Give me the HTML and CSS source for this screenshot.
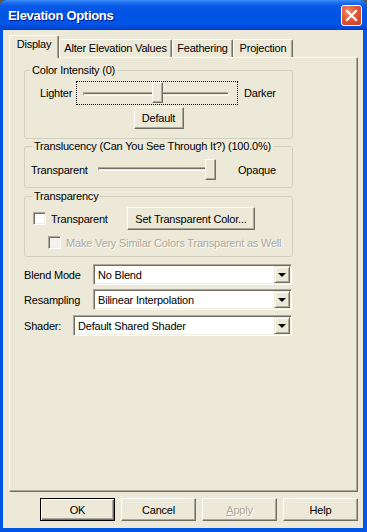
FILE: index.html
```html
<!DOCTYPE html>
<html>
<head>
<meta charset="utf-8">
<link rel="stylesheet" href="styles.css">
</head>
<body>
<div class="window">
  <div class="titlebar">
    <span class="title">Elevation Options</span>
    <span class="close">
      <svg width="21" height="21" viewBox="0 0 21 21">
        <path d="M6 6 L15 15 M15 6 L6 15" stroke="#fff" stroke-width="2.2" stroke-linecap="square"/>
      </svg>
    </span>
  </div>
  <div class="client">
    <div class="tabs">
      <div class="tab selected w-display">Display</div>
      <div class="tab w-alter">Alter Elevation Values</div>
      <div class="tab w-feather">Feathering</div>
      <div class="tab w-proj">Projection</div>
    </div>
    <div class="panel">
      <fieldset class="group g1">
        <legend>Color Intensity (0)</legend>
        <div class="row r1">
          <span class="lbl lbl-lighter">Lighter</span>
          <div class="slider s1">
            <div class="track"></div>
            <div class="thumb"></div>
          </div>
          <span class="lbl lbl-darker">Darker</span>
        </div>
        <div class="center">
          <button class="btn btn-default">Default</button>
        </div>
      </fieldset>

      <fieldset class="group g2">
        <legend>Translucency (Can You See Through It?) (100.0%)</legend>
        <div class="row r2">
          <span class="lbl lbl-transp">Transparent</span>
          <div class="slider s2">
            <div class="track"></div>
            <div class="thumb"></div>
          </div>
          <span class="lbl lbl-opaque">Opaque</span>
        </div>
      </fieldset>

      <fieldset class="group g3">
        <legend>Transparency</legend>
        <div class="row r3">
          <span class="check"></span>
          <span class="lbl lbl-chk">Transparent</span>
          <button class="btn btn-setcolor">Set Transparent Color...</button>
        </div>
        <div class="row r4">
          <span class="check disabled"></span>
          <span class="lbl disabled-text">Make Very Similar Colors Transparent as Well</span>
        </div>
      </fieldset>

      <div class="field f1">
        <span class="flabel fl-wide">Blend Mode</span>
        <div class="combo cw-199"><span class="ctext">No Blend</span><span class="dd"><span class="arrow"></span></span></div>
      </div>
      <div class="field f2">
        <span class="flabel fl-wide">Resampling</span>
        <div class="combo cw-199"><span class="ctext">Bilinear Interpolation</span><span class="dd"><span class="arrow"></span></span></div>
      </div>
      <div class="field f3">
        <span class="flabel fl-narrow">Shader:</span>
        <div class="combo cw-219"><span class="ctext">Default Shared Shader</span><span class="dd"><span class="arrow"></span></span></div>
      </div>
    </div>
    <div class="buttons">
      <button class="btn dlg default-btn">OK</button>
      <button class="btn dlg">Cancel</button>
      <button class="btn dlg disabled-btn"><u>A</u>pply</button>
      <button class="btn dlg">Help</button>
    </div>
  </div>
</div>
</body>
</html>
```

FILE: styles.css
```css
html, body {
  margin: 0;
  padding: 0;
  background: #5a5a4a;
}
body {
  width: 367px;
  height: 532px;
  overflow: hidden;
  font-family: "Liberation Sans", Arial, sans-serif;
  font-size: 11px;
  letter-spacing: -0.2px;
  color: #000;
}
.window {
  width: 367px;
  height: 532px;
  display: flex;
  flex-direction: column;
  border-radius: 7px 7px 0 0;
  overflow: hidden;
  background: #0055e5;
}
.titlebar {
  height: 30px;
  flex: none;
  display: flex;
  align-items: center;
  justify-content: space-between;
  padding: 0 5px 0 8px;
  background: linear-gradient(#3c8ef6 0px, #1a6cf0 3px, #0859e8 6px, #0054e3 14px, #0056e8 24px, #0047d6 28px, #003bc0 30px);
}
.title {
  color: #fff;
  font-family: "Liberation Sans", Arial, sans-serif;
  font-weight: bold;
  font-size: 13px;
  letter-spacing: -0.3px;
  text-shadow: 1px 1px #0a1a8c;
  margin-top: 1px;
}
.close {
  width: 21px;
  height: 21px;
  box-sizing: border-box;
  border: 1px solid #fff;
  border-radius: 3px;
  background: radial-gradient(circle at 35% 30%, #f08a6c 0%, #e0583a 45%, #c43c1c 100%);
  display: flex;
  align-items: center;
  justify-content: center;
}
.close svg {
  display: block;
  margin: -1px;
}
.client {
  flex: 1;
  margin: 0 4px 4px 3px;
  background: #ece9d8;
  display: flex;
  flex-direction: column;
}
.tabs {
  height: 22px;
  margin-top: 5px;
  padding-left: 6px;
  display: flex;
  align-items: flex-end;
  position: relative;
  z-index: 1;
}
.tab {
  box-sizing: border-box;
  height: 18px;
  border-top: 1px solid #fff;
  border-left: 1px solid #fff;
  border-right: 1px solid #716f64;
  box-shadow: inset -1px 0 #aca899;
  border-radius: 2px 2px 0 0;
  background: #ece9d8;
  text-align: center;
  line-height: 16px;
  white-space: nowrap;
}
.tab.selected {
  height: 23px;
  margin-bottom: -1px;
  line-height: 17px;
}
.w-display { width: 50px; }
.w-alter { width: 113px; }
.w-feather { width: 61px; }
.w-proj { width: 60px; }

.panel {
  box-sizing: border-box;
  margin-left: 6px;
  width: 349px;
  height: 435px;
  border-top: 1px solid #fff;
  border-left: 1px solid #fff;
  border-right: 1px solid #716f64;
  border-bottom: 1px solid #716f64;
  box-shadow: inset -1px -1px #aca899;
  padding: 6px 0 0 14px;
  display: flex;
  flex-direction: column;
  align-items: flex-start;
}

.group {
  margin: 0;
  padding: 0;
  min-width: 0;
  box-sizing: border-box;
  width: 269px;
  border: 1px solid #d0d0bf;
  border-radius: 3px;
}
.group legend {
  padding: 0 2px;
  margin-left: 7px;
  line-height: 13px;
  height: 13px;
}
.g1 legend { margin-left: 5px; }
.g1 { padding: 4px 0 9px 0; }
.g2 { margin-top: 1px; padding: 5px 0 6px 0; }
.g3 { margin-top: 2px; padding: 4px 0 7px 0; }

.row {
  display: flex;
  align-items: center;
}
.r1 { height: 24px; padding-left: 15px; }
.r2 { height: 23px; padding-left: 6px; }
.r3 { height: 23px; padding-left: 8px; }
.r4 { height: 13px; padding-left: 23px; margin-top: 6px; }

.lbl { white-space: nowrap; }
.lbl-lighter { width: 36px; }
.lbl-darker { margin-left: 6px; }
.lbl-transp { width: 63px; }
.lbl-opaque { margin-left: 18px; }
.lbl-chk { margin-left: 5px; width: 76px; }
.r4 .lbl { margin-left: 5px; }

.slider {
  position: relative;
  box-sizing: border-box;
  flex: none;
}
.s1 {
  width: 162px;
  height: 24px;
  border: 1px dotted #000;
}
.s2 {
  width: 126px;
  height: 23px;
}
.track {
  position: absolute;
  box-sizing: border-box;
  height: 4px;
  border-top: 1px solid #aca899;
  border-left: 1px solid #aca899;
  border-bottom: 1px solid #fff;
  border-right: 1px solid #fff;
  box-shadow: inset 0 1px #716f64;
  background: #ece9d8;
}
.s1 .track { left: 6px; width: 146px; top: 10px; }
.s2 .track { left: 4px; width: 118px; top: 9px; }
.thumb {
  position: absolute;
  box-sizing: border-box;
  width: 11px;
  height: 21px;
  background: #ece9d8;
  border-top: 1px solid #fff;
  border-left: 1px solid #fff;
  border-right: 1px solid #716f64;
  border-bottom: 1px solid #716f64;
  box-shadow: inset -1px -1px #aca899;
}
.s1 .thumb { left: 75px; top: 0px; }
.s2 .thumb { left: 111px; top: 1px; }

.center {
  display: flex;
  justify-content: center;
  margin-top: 2px;
}

.btn {
  font-family: "Liberation Sans", Arial, sans-serif;
  font-size: 11px;
  letter-spacing: -0.2px;
  color: #000;
  background: #ece9d8;
  box-sizing: border-box;
  border: 1px solid;
  border-color: #fff #716f64 #716f64 #fff;
  box-shadow: inset -1px -1px #aca899;
  padding: 0;
  margin: 0;
  border-radius: 0;
  white-space: nowrap;
}
.btn-default { width: 50px; height: 22px; }
.btn-setcolor { width: 128px; height: 23px; }

.check {
  flex: none;
  box-sizing: border-box;
  width: 13px;
  height: 13px;
  background: #fff;
  border: 1px solid;
  border-color: #aca899 #fff #fff #aca899;
  box-shadow: inset 1px 1px #716f64, inset -1px -1px #f1efe2;
}
.check.disabled { background: #f4f2ea; }
.disabled-text {
  color: #aca899;
  text-shadow: 1px 1px #fff;
}

.field {
  display: flex;
  align-items: center;
  height: 21px;
}
.f1 { margin-top: 7px; }
.f2 { margin-top: 4px; }
.f3 { margin-top: 5px; }
.flabel { white-space: nowrap; }
.fl-wide { width: 69px; }
.fl-narrow { width: 49px; }
.combo {
  box-sizing: border-box;
  height: 21px;
  background: #fff;
  border: 1px solid;
  border-color: #aca899 #fff #fff #aca899;
  box-shadow: inset 1px 1px #716f64, inset -1px -1px #f1efe2;
  display: flex;
  align-items: center;
  justify-content: space-between;
  padding: 1px;
}
.cw-199 { width: 199px; }
.cw-219 { width: 219px; }
.ctext { padding-left: 3px; white-space: nowrap; }
.dd {
  box-sizing: border-box;
  width: 16px;
  height: 17px;
  background: #ece9d8;
  border: 1px solid;
  border-color: #ece9d8 #716f64 #716f64 #ece9d8;
  box-shadow: inset 1px 1px #fff, inset -1px -1px #aca899;
  display: flex;
  align-items: center;
  justify-content: center;
}
.arrow {
  width: 0;
  height: 0;
  border-left: 4px solid transparent;
  border-right: 4px solid transparent;
  border-top: 4px solid #000;
  margin-top: 1px;
}

.buttons {
  display: flex;
  justify-content: flex-end;
  gap: 6px;
  margin-top: 6px;
  padding-right: 5px;
}
.dlg { width: 75px; height: 23px; }
.default-btn {
  border: 1px solid #000;
  box-shadow: inset 1px 1px #fff, inset -1px -1px #716f64, inset -2px -2px #aca899;
}
.disabled-btn {
  color: #aca899;
  text-shadow: 1px 1px #fff;
}
.disabled-btn u { text-decoration: underline; }
```
